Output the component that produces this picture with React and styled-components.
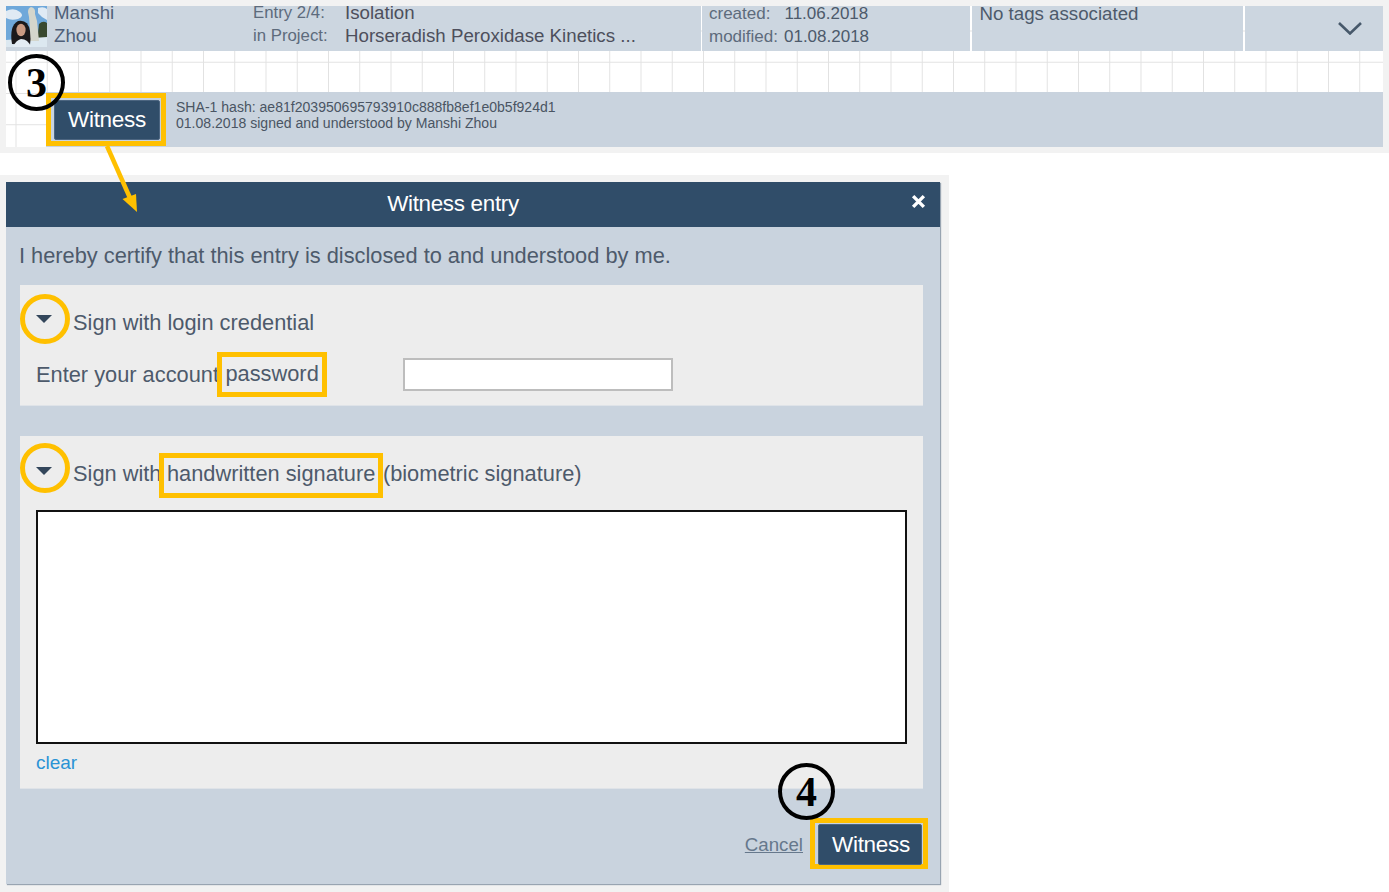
import React from "react"
import styled, { createGlobalStyle } from "styled-components"

const GlobalStyle = createGlobalStyle`
  html, body {
    margin: 0;
    padding: 0;
    background: #fff;
    font-family: "Liberation Sans", Arial, sans-serif;
  }
`

const Page = styled.div`
  position: relative;
  width: 1389px;
  height: 892px;
  overflow: hidden;
  background: #fff;
`

const TopBand = styled.div`
  box-sizing: border-box;
  height: 153px;
  padding: 6px;
  background: #f2f2f2;
`

const EntryCard = styled.div`
  display: flex;
  flex-direction: column;
  height: 141px;
  background-color: #fff;
  background-image: linear-gradient(to right, #e2e2e2 1px, transparent 1px),
    linear-gradient(to bottom, #e2e2e2 1px, transparent 1px);
  background-size: 31.25px 31.25px;
  background-position: 9.5px 24.5px;
`

const EntryHeader = styled.div`
  display: grid;
  grid-template-columns: 696px 269.5px 273px 1fr;
  height: 45px;
`

const HeaderCell = styled.div`
  display: flex;
  height: 45px;
  overflow: hidden;
  box-sizing: border-box;
  background: #ccd6e0;
  margin-right: ${(props) => (props.$last ? "0" : "1.5px")};
  align-items: ${(props) => props.$align || "flex-end"};
  justify-content: ${(props) => props.$justify || "flex-start"};
  padding: ${(props) => props.$pad || "0 0 4px 0"};
  color: #4d5a6b;
  font-size: 18.7px;
  line-height: 23px;
`

const Avatar = styled.svg`
  width: 41px;
  height: 41px;
  flex: none;
  align-self: flex-start;
  filter: blur(0.5px);
`

const TextStack = styled.div`
  flex: none;
  width: ${(props) => props.$width};
  margin-left: ${(props) => props.$left || "0"};
  color: ${(props) => props.$color || "inherit"};
  font-size: ${(props) => props.$size || "18.7px"};
  white-space: nowrap;
`

const MetaRow = styled.div`
  display: flex;
  gap: ${(props) => props.$gap};
  font-size: 17px;
`

const MetaLabel = styled.span`
  color: #5d6b7c;
`

const EntryFooter = styled.div`
  display: flex;
  height: 55px;
  margin-top: 41px;
  margin-left: 40px;
  background: #c9d3de;
`

const Highlight = styled.div`
  box-sizing: border-box;
  border: 5px solid #ffc000;
  flex: none;
`

const ButtonFrame = styled(Highlight)`
  width: 120px;
  height: 53px;
  margin-top: 1px;
  padding: 2px 0 0 3px;
`

const DarkButton = styled.button`
  display: block;
  box-sizing: border-box;
  width: 106px;
  height: 40px;
  padding: 0;
  border: 1px solid #4c6580;
  border-radius: 2px;
  background: #304d69;
  color: #fff;
  font-family: inherit;
  font-size: 22.5px;
  letter-spacing: -0.3px;
`

const FooterButton = styled(DarkButton)`
  width: 104px;
  height: 41px;
  padding-left: 2px;
`

const HashText = styled.div`
  margin: 8px 0 0 10px;
  color: #4a5563;
  font-size: 14.05px;
  line-height: 15.5px;
  white-space: nowrap;
`

const ModalBand = styled.div`
  box-sizing: border-box;
  width: 949px;
  height: 717px;
  margin-top: 22px;
  padding: 7px 9px 8px 6px;
  background: #f2f2f2;
`

const Dialog = styled.div`
  display: flex;
  flex-direction: column;
  height: 702px;
  background: #c9d3de;
  box-shadow: 1px 1px 1px #98a4b1;
`

const DialogTitleBar = styled.div`
  display: flex;
  align-items: center;
  flex: none;
  height: 45px;
  background: #304d69;
  color: #fff;
`

const DialogTitle = styled.div`
  flex: 1;
  margin-bottom: 2px;
  text-align: center;
  font-size: 22.4px;
  letter-spacing: -0.3px;
`

const CloseSlot = styled.div`
  display: flex;
  justify-content: center;
  box-sizing: border-box;
  width: 40px;
  margin-bottom: 7px;
  padding-right: 4px;
`

const Certify = styled.div`
  height: 58px;
  padding-left: 13px;
  color: #4d5a6b;
  font-size: 21.8px;
  line-height: 58px;
  white-space: nowrap;
`

const Section = styled.section`
  box-sizing: border-box;
  height: ${(props) => props.$height};
  margin: ${(props) => props.$margin || "0"} 17px 0 14px;
  background: #ededed;
  border-bottom: 1px solid #dfe3e8;
  color: #4d5a6b;
  font-size: 21.8px;
`

const SectionHead = styled.div`
  display: flex;
  align-items: flex-start;
  gap: 3px;
  padding-top: ${(props) => props.$top};
  white-space: nowrap;
`

const CaretRing = styled.div`
  display: flex;
  align-items: center;
  justify-content: center;
  flex: none;
  box-sizing: border-box;
  width: 50px;
  height: 50px;
  border: 5px solid #ffc000;
  border-radius: 50%;
`

const Caret = styled.div`
  width: 0;
  height: 0;
  margin: ${(props) => props.$margin};
  border-left: 8px solid transparent;
  border-right: 8px solid transparent;
  border-top: 8px solid #33465b;
`

const SectionLabel = styled.div`
  margin-top: ${(props) => props.$top};
`

const PasswordRow = styled.div`
  display: flex;
  align-items: center;
  height: 45px;
  margin-top: 8px;
  padding-left: 16px;
  white-space: nowrap;
`

const WordBox = styled.span`
  display: inline-block;
  box-sizing: border-box;
  height: 45px;
  margin-left: ${(props) => props.$left};
  padding: 0 ${(props) => props.$pad};
  border: 5px solid #ffc000;
  line-height: ${(props) => props.$line};
`

const PasswordInput = styled.input`
  box-sizing: border-box;
  width: 270px;
  height: 33px;
  margin-left: 76px;
  border: 2px solid #bdbdbd;
  background: #fff;
`

const SignaturePad = styled.div`
  box-sizing: border-box;
  width: 871px;
  height: 234px;
  margin: 12px 0 0 16px;
  border: 2px solid #111;
  background: #fff;
`

const ClearLink = styled.a`
  display: block;
  margin: 7px 0 0 16px;
  color: #2a93d5;
  font-size: 19px;
  line-height: 23px;
`

const DialogFooter = styled.div`
  display: flex;
  justify-content: flex-end;
  align-items: flex-start;
  flex: 1;
  padding: 29px 12px 0 0;
`

const CancelLink = styled.a`
  margin: 16px 7px 0 0;
  color: #66788c;
  font-size: 18.7px;
  line-height: 22px;
  text-decoration: underline;
`

const FooterFrame = styled(Highlight)`
  width: 118px;
  height: 51px;
  padding: 1px 0 0 3px;
`

const NumberBadge = styled.div`
  position: absolute;
  left: ${(props) => props.$x}px;
  top: ${(props) => props.$y}px;
  display: flex;
  align-items: center;
  justify-content: center;
  box-sizing: border-box;
  width: 57px;
  height: 57px;
  border: 4px solid #000;
  border-radius: 50%;
  color: #000;
  font-family: "Liberation Serif", "Times New Roman", serif;
  font-size: 42px;
  font-weight: bold;
`

const Arrow = styled.svg`
  position: absolute;
  left: 95px;
  top: 140px;
  width: 55px;
  height: 80px;
`

const App = () => {
  return (
    <Page>
      <GlobalStyle />
      <TopBand>
        <EntryCard>
          <EntryHeader>
            <HeaderCell>
              <Avatar viewBox="0 0 41 41">
                <rect width="41" height="41" fill="#6fa8da" />
                <path d="M0 5 Q8 1 14 6 Q19 10 12 13 Q5 15 0 12Z M32 2 Q38 0 41 3 V14 Q36 12 32 7Z" fill="#dfeaf4" />
                <path d="M33 18 Q37 14 41 17 V36 H31Z" fill="#39492f" />
                <path d="M0 34 L41 31 V41 H0Z" fill="#dce8f0" />
                <path d="M25 1 q5 1 4 7 l2 7 l1 10 l1 10 h-10 l1 -12 l-1 -12 l-1 -5 q0 -4 3 -5z" fill="#d4d6cc" />
                <path d="M6 38 Q3 20 12 15 Q22 13 24 25 Q25 33 24 39Z" fill="#1b191b" />
                <ellipse cx="15" cy="24" rx="4.6" ry="6.2" fill="#c99a83" />
                <path d="M7 41 Q10 34 15 33 Q22 33 25 41Z" fill="#e4ecf3" />
              </Avatar>
              <TextStack $width="199px" $left="7px" $color="#4f5f78">
                <div>Manshi</div>
                <div>Zhou</div>
              </TextStack>
              <TextStack $width="92px" $color="#5d6b7c" $size="16.8px">
                <div>Entry 2/4:</div>
                <div>in Project:</div>
              </TextStack>
              <TextStack $width="320px" $color="#4d4f5c">
                <div>Isolation</div>
                <div>Horseradish Peroxidase Kinetics ...</div>
              </TextStack>
            </HeaderCell>
            <HeaderCell $pad="0 0 3px 7px">
              <TextStack $width="200px">
                <MetaRow $gap="14px">
                  <MetaLabel>created:</MetaLabel>
                  <span>11.06.2018</span>
                </MetaRow>
                <MetaRow $gap="6px">
                  <MetaLabel>modified:</MetaLabel>
                  <span>01.08.2018</span>
                </MetaRow>
              </TextStack>
            </HeaderCell>
            <HeaderCell $pad="0 0 26px 8px">No tags associated</HeaderCell>
            <HeaderCell $last $justify="flex-end" $align="center" $pad="0 21px 0 0">
              <svg width="24" height="13" viewBox="0 0 24 13" fill="none">
                <path d="M1 1 L12 11.5 L23 1" stroke="#47596b" strokeWidth="2.6" />
              </svg>
            </HeaderCell>
          </EntryHeader>
          <EntryFooter>
            <ButtonFrame>
              <DarkButton>Witness</DarkButton>
            </ButtonFrame>
            <HashText>
              <div>SHA-1 hash: ae81f203950695793910c888fb8ef1e0b5f924d1</div>
              <div>01.08.2018 signed and understood by Manshi Zhou</div>
            </HashText>
          </EntryFooter>
        </EntryCard>
      </TopBand>

      <ModalBand>
        <Dialog>
          <DialogTitleBar>
            <DialogTitle>Witness entry</DialogTitle>
            <CloseSlot>
              <svg width="15" height="15" viewBox="0 0 14 14">
                <path d="M2 2 L12 12 M12 2 L2 12" stroke="#fff" strokeWidth="3.2" />
              </svg>
            </CloseSlot>
          </DialogTitleBar>
          <Certify>I hereby certify that this entry is disclosed to and understood by me.</Certify>
          <Section $height="121px">
            <SectionHead $top="9px">
              <CaretRing>
                <Caret $margin="0 2px 1px 0" />
              </CaretRing>
              <SectionLabel $top="15.5px">Sign with login credential</SectionLabel>
            </SectionHead>
            <PasswordRow>
              Enter your account
              <WordBox $left="-2px" $pad="3.5px" $line="34px">password</WordBox>
              <PasswordInput type="text" />
            </PasswordRow>
          </Section>
          <Section $height="353px" $margin="30px">
            <SectionHead $top="7px">
              <CaretRing>
                <Caret $margin="5px 2px 0 0" />
              </CaretRing>
              <SectionLabel $top="10px">
                Sign with
                <WordBox $left="-2px" $pad="2.5px" $line="32px">handwritten signature</WordBox>
                (biometric signature)
              </SectionLabel>
            </SectionHead>
            <SignaturePad />
            <ClearLink>clear</ClearLink>
          </Section>
          <DialogFooter>
            <CancelLink>Cancel</CancelLink>
            <FooterFrame>
              <FooterButton>Witness</FooterButton>
            </FooterFrame>
          </DialogFooter>
        </Dialog>
      </ModalBand>

      <NumberBadge $x={8} $y={54}>3</NumberBadge>
      <NumberBadge $x={778} $y={763}>4</NumberBadge>
      <Arrow viewBox="0 0 55 80">
        <path d="M12 6 L35 58" stroke="#ffc000" strokeWidth="4.5" fill="none" />
        <path d="M27.5 59 L41 54 L42 72Z" fill="#ffc000" />
      </Arrow>
    </Page>
  )
}

export default App
